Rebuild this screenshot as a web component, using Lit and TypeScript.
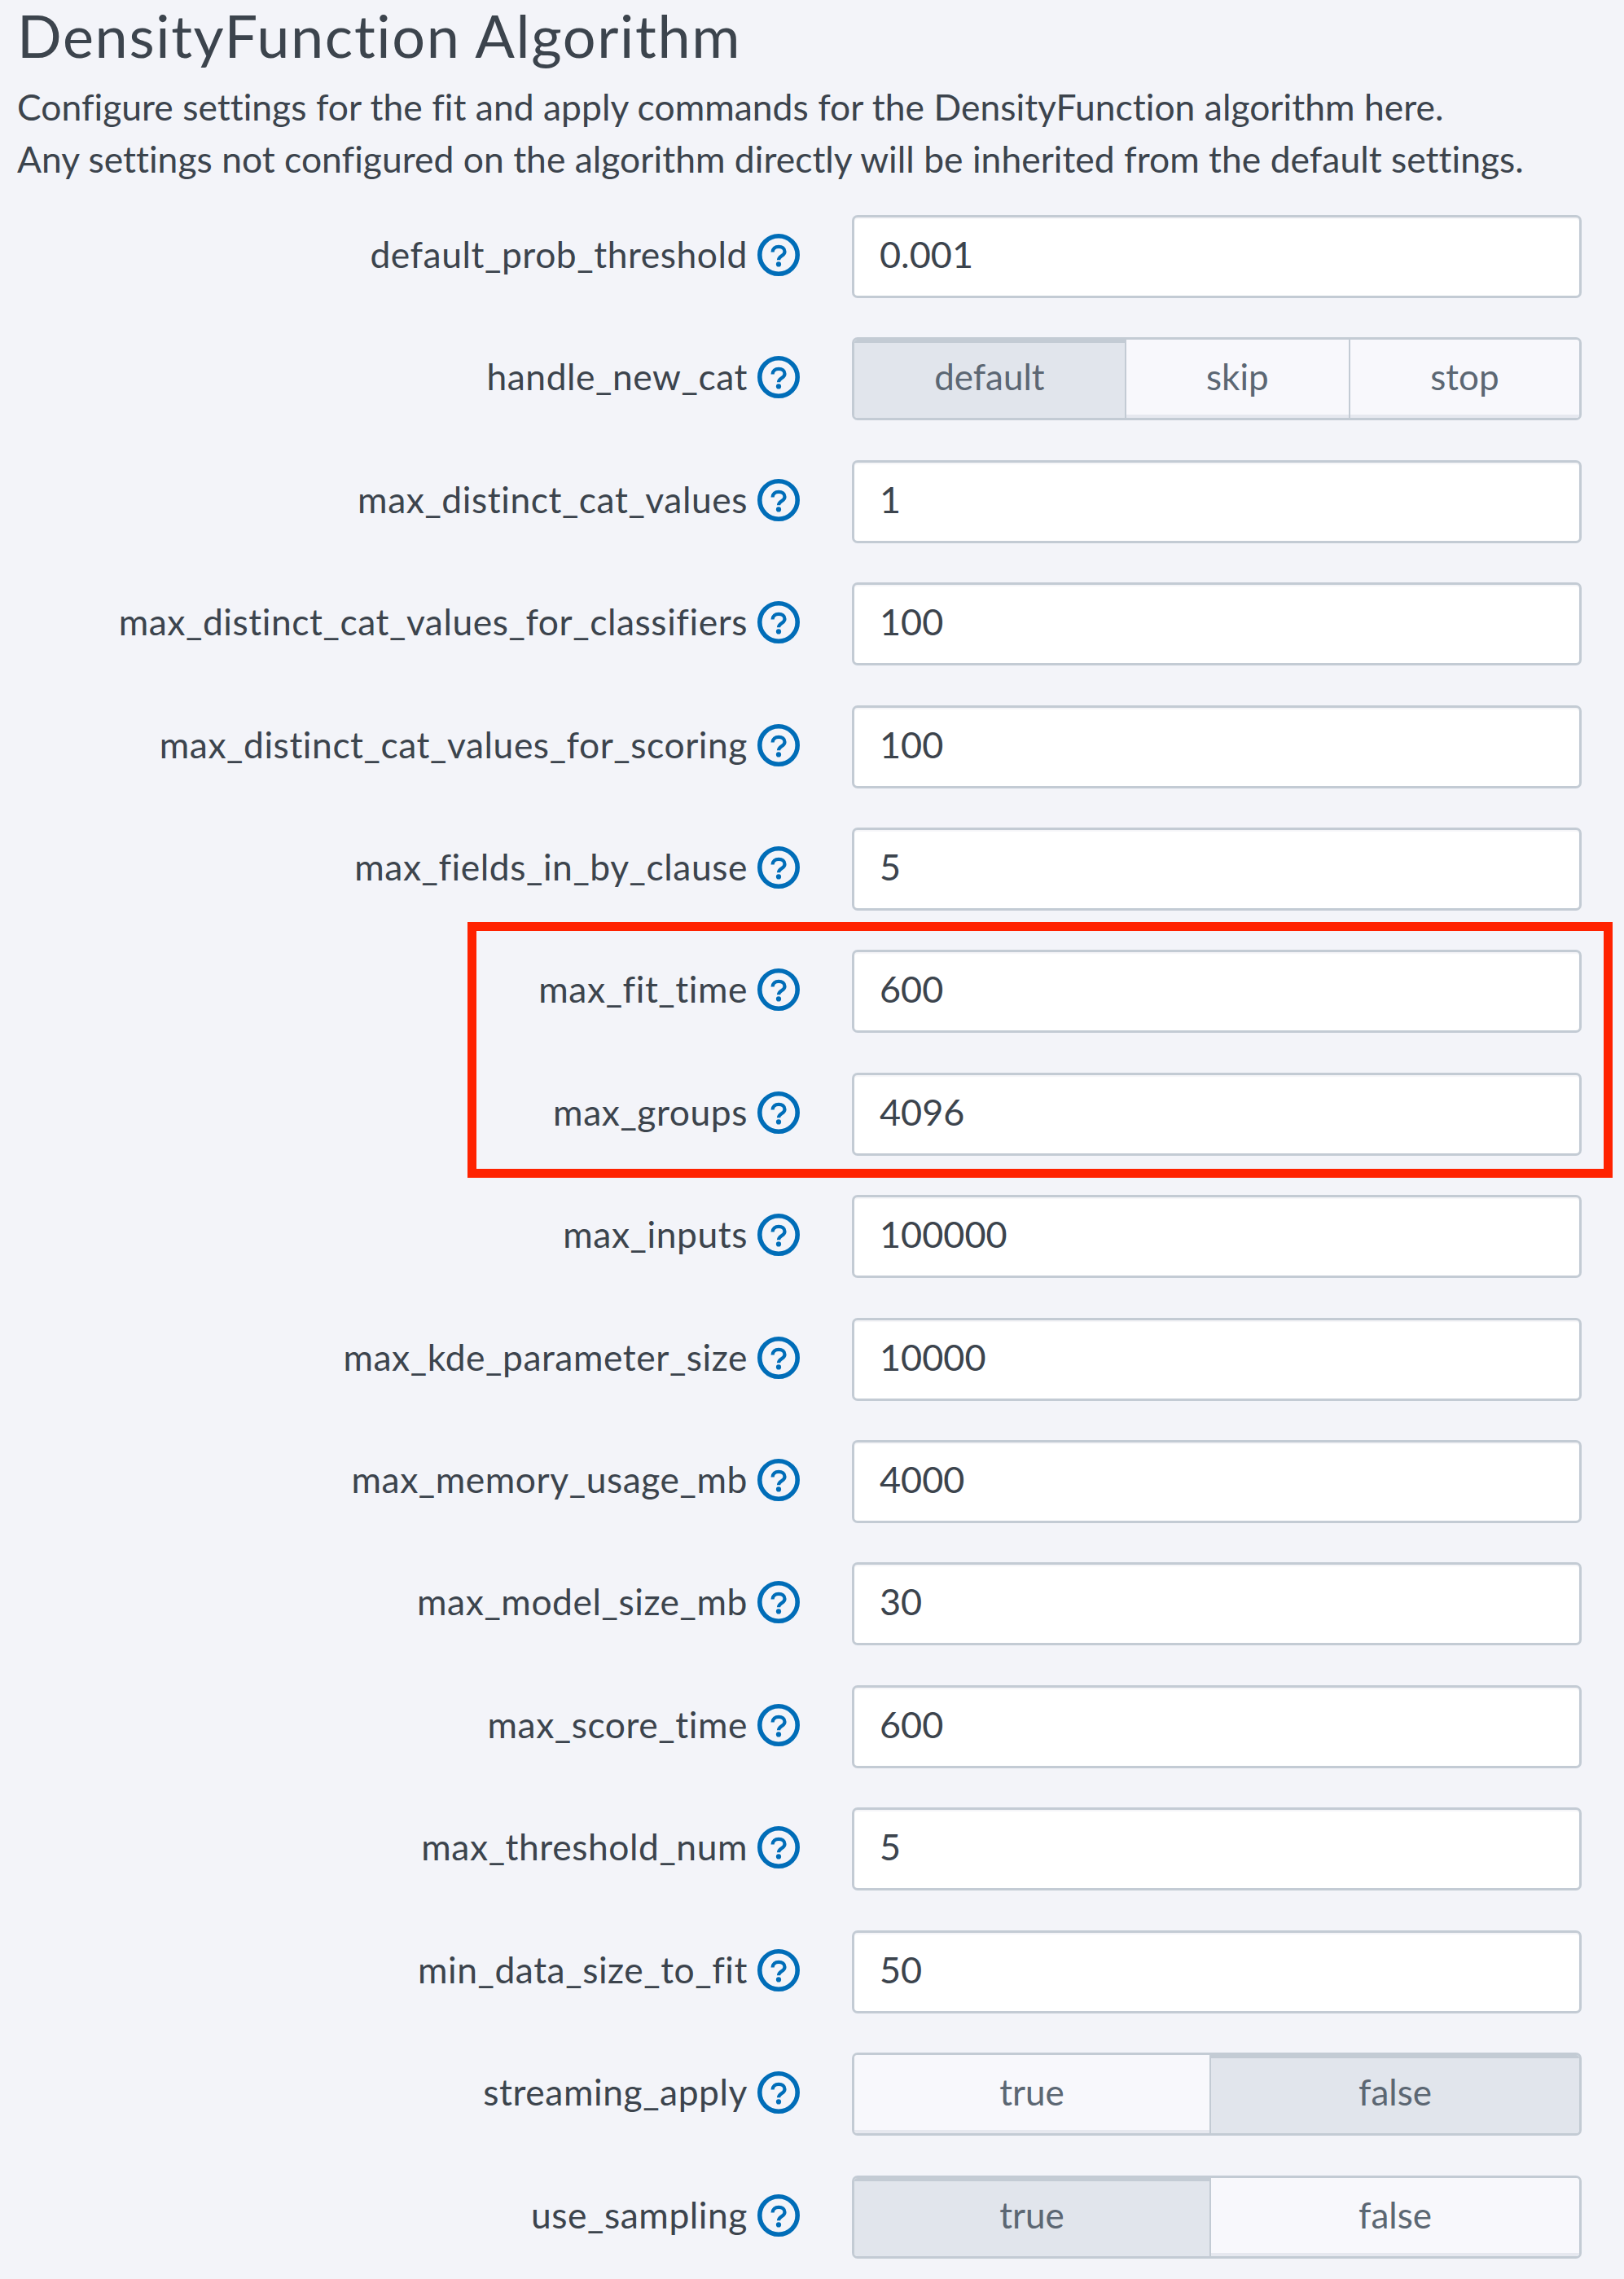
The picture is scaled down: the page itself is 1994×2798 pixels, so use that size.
import { LitElement, html, css, svg } from "lit";
import { customElement } from "lit/decorators.js";

type Row = { label: string; value?: string; options?: string[]; widths?: number[]; active?: number };

const rows: Row[] = [
  { label: "default_prob_threshold", value: "0.001" },
  { label: "handle_new_cat", options: ["default", "skip", "stop"], widths: [334, 277, 285], active: 0 },
  { label: "max_distinct_cat_values", value: "1" },
  { label: "max_distinct_cat_values_for_classifiers", value: "100" },
  { label: "max_distinct_cat_values_for_scoring", value: "100" },
  { label: "max_fields_in_by_clause", value: "5" },
  { label: "max_fit_time", value: "600" },
  { label: "max_groups", value: "4096" },
  { label: "max_inputs", value: "100000" },
  { label: "max_kde_parameter_size", value: "10000" },
  { label: "max_memory_usage_mb", value: "4000" },
  { label: "max_model_size_mb", value: "30" },
  { label: "max_score_time", value: "600" },
  { label: "max_threshold_num", value: "5" },
  { label: "min_data_size_to_fit", value: "50" },
  { label: "streaming_apply", options: ["true", "false"], widths: [439, 457], active: 1 },
  { label: "use_sampling", options: ["true", "false"], widths: [439, 457], active: 0 },
];

const helpIcon = svg`<svg class="help" viewBox="0 0 52 52" width="52" height="52" fill="none">
  <circle cx="26" cy="26" r="23.2" stroke="#006db8" stroke-width="5.6"/>
  <path d="M18.6 22.6c0-4.4 3.2-6.8 7.5-6.8s7.4 2.4 7.4 6.1c0 5.4-7.5 5.4-7.5 10.3" stroke="#006db8" stroke-width="4.2"/>
  <circle cx="26" cy="37.4" r="3.1" fill="#006db8"/>
</svg>`;

@customElement("app-root")
export class AppRoot extends LitElement {
  static styles = css`
    :host {
      display: block;
      min-height: 100vh;
      background: #f3f4f9;
      color: #3c444d;
      font-family: Lato, "Open Sans", sans-serif;
      font-variant-ligatures: none;
      box-sizing: border-box;
      overflow: hidden;
    }
    .head {
      padding: 0 0 0 21px;
      height: 264px;
      box-sizing: border-box;
    }
    h1 {
      margin: 0;
      font-size: 72px;
      font-weight: 400;
      line-height: 87px;
      letter-spacing: 1.65px;
    }
    p {
      margin: 0;
      font-size: 44.4px;
      line-height: 64px;
      letter-spacing: 0.03px;
    }
    h1 + p {
      margin-top: 12px;
    }
    .rows,
    .mark-group {
      display: flex;
      flex-direction: column;
      gap: 48.42px;
    }
    .mark-group {
      position: relative;
    }
    .mark {
      position: absolute;
      left: 574px;
      top: -34.5px;
      bottom: -27px;
      width: 1406px;
      box-sizing: border-box;
      border: 11px solid #ff2200;
      pointer-events: none;
    }
    .row {
      display: flex;
      align-items: center;
      height: 102px;
    }
    .label {
      width: 918px;
      text-align: right;
      font-size: 44.4px;
      letter-spacing: 0.55px;
      white-space: nowrap;
      padding-bottom: 7px;
    }
    .help {
      margin-left: 12px;
      margin-bottom: 4px;
      flex: none;
    }
    .control {
      margin-left: 64px;
      width: 896px;
      height: 102px;
      box-sizing: border-box;
    }
    .input {
      display: flex;
      align-items: center;
      padding-left: 31px;
      padding-bottom: 6px;
      background: #fff;
      border: 3px solid #c3cbd4;
      border-radius: 7px;
      box-shadow: inset 0 2px 1px #f5f5f8;
      font-size: 45px;
    }
    .group {
      display: flex;
      border: 3px solid #c3cbd4;
      border-radius: 7px;
      overflow: hidden;
    }
    .btn {
      flex: none;
      box-sizing: border-box;
      padding: 0 0 6px;
      border: 0;
      margin: 0;
      background: #f8f8fc;
      color: #5c6773;
      font: inherit;
      font-size: 44px;
      box-shadow: inset 0 -4px 0 #e6e8ef;
    }
    .btn + .btn {
      border-left: 2px solid #c3cbd4;
    }
    .btn.on {
      background: #e1e5ec;
      box-shadow: inset 0 4px 0 #c3cbd4;
    }
  `;

  private renderRow(r: Row) {
    return html`<div class="row">
      <div class="label">${r.label}</div>
      ${helpIcon}
      ${r.options
        ? html`<div class="control group">
            ${r.options.map(
              (o, i) =>
                html`<button
                  class="btn ${i === r.active ? "on" : ""}"
                  style="width:${(r.widths![i] / 896) * 100}%"
                >
                  ${o}
                </button>`
            )}
          </div>`
        : html`<div class="control input">${r.value}</div>`}
    </div>`;
  }

  render() {
    return html`
      <div class="head">
        <h1>DensityFunction Algorithm</h1>
        <p>Configure settings for the fit and apply commands for the DensityFunction algorithm here.</p>
        <p>Any settings not configured on the algorithm directly will be inherited from the default settings.</p>
      </div>
      <div class="rows">
        ${rows.slice(0, 6).map((r) => this.renderRow(r))}
        <div class="mark-group">
          ${rows.slice(6, 8).map((r) => this.renderRow(r))}
          <div class="mark"></div>
        </div>
        ${rows.slice(8).map((r) => this.renderRow(r))}
      </div>
    `;
  }
}
